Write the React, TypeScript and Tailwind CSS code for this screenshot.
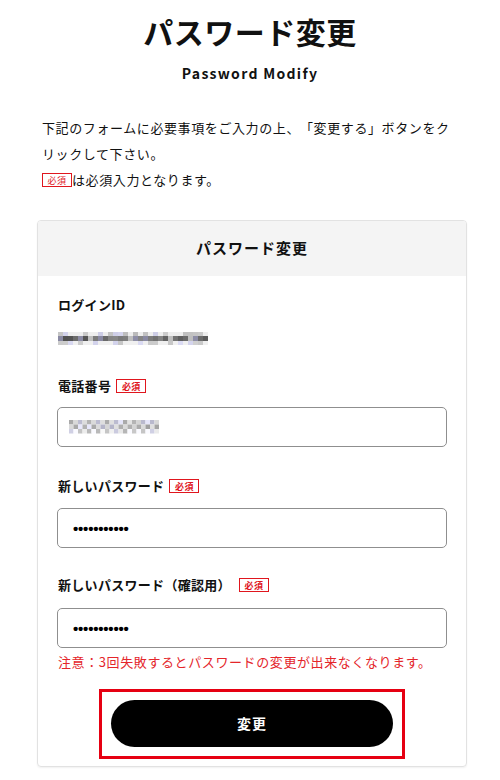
import React from "react";

const JP = '"Noto Sans CJK JP", "Noto Sans", sans-serif';

function rand(seed: number) {
  let s = seed;
  return () => {
    s = (s * 9301 + 49297) % 233280;
    return s / 233280;
  };
}

function EmailMosaic() {
  const r = rand(11);
  const cols = 30;
  const rows = 3;
  const heights = [4, 5, 4];
  const offsets = [0, 4, 9];
  const cells: React.ReactElement[] = [];
  const gaps = [6, 14, 22, 26];
  for (let y = 0; y < rows; y++) {
    for (let x = 0; x < cols; x++) {
      const v = r();
      let g: number;
      if (y === 0) g = v < 0.45 ? 238 : 165 + Math.floor(v * 50);
      else if (y === 1) g = gaps.includes(x) ? 190 : 80 + Math.floor(v * 70);
      else g = v < 0.55 ? 240 : 170 + Math.floor(v * 50);
      const b = Math.min(255, g + (v > 0.8 ? 25 : 0));
      cells.push(
        <rect key={`${x}-${y}`} x={x * 5} y={offsets[y]} width={5} height={heights[y]} fill={`rgb(${g},${g},${b})`} />
      );
    }
  }
  return (
    <svg width={150} height={13} viewBox="0 0 150 13">
      {cells}
    </svg>
  );
}

function PhoneMosaic() {
  const r = rand(3);
  const cols = 20;
  const rows = 3;
  const cells: React.ReactElement[] = [];
  for (let y = 0; y < rows; y++) {
    for (let x = 0; x < cols; x++) {
      const v = r();
      const dark = (x + y) % 2 === 0;
      let g = dark ? 160 + Math.floor(v * 30) : 212 + Math.floor(v * 25);
      if (y === 2) g = Math.min(250, g + 20);
      const b = Math.min(255, g + (v > 0.7 ? 20 : 0));
      cells.push(
        <rect key={`${x}-${y}`} x={x * 4.5} y={y * 4.5} width={4.5} height={4.5} fill={`rgb(${g},${g},${b})`} />
      );
    }
  }
  return (
    <svg width={90} height={13.5} viewBox="0 0 90 13.5">
      {cells}
    </svg>
  );
}

function Badge() {
  return (
    <span className="inline-flex h-[14px] w-[30px] items-center justify-center border border-[#e0161e] text-[9px] leading-none text-[#e0161e]">
      必須
    </span>
  );
}

function Dots() {
  return (
    <span
      className="text-[15px] font-bold leading-none tracking-[-0.2px] text-black"
      style={{ fontFamily: '"Liberation Sans", sans-serif' }}
    >
      •••••••••••
    </span>
  );
}

export default function App() {
  return (
    <div className="min-h-[780px] w-[500px] bg-white text-[#111] [text-spacing-trim:space-all]" style={{ fontFamily: JP }}>
      <div className="pt-[11px]">
        <h1 className="text-center text-[30px] font-bold leading-[40px] tracking-[0.5px]">パスワード変更</h1>
        <p className="mt-[12px] text-center text-[14px] font-bold leading-[20px] tracking-[1.3px]">Password Modify</p>

        <div className="mx-[42px] mt-[32px] text-[13px] leading-[26px] tracking-[0.6px]">
          <p>下記のフォームに必要事項をご入力の上、「変更する」ボタンをクリックして下さい。</p>
          <p className="flex items-center">
            <Badge />
            <span>は必須入力となります。</span>
          </p>
        </div>

        <div className="ml-[37px] mt-[27px] w-[430px] overflow-hidden rounded-[4px] border border-[#e2e2e2] shadow-[0_1px_2px_rgba(0,0,0,0.06)]">
          <div className="flex h-[55px] items-center justify-center bg-[#f4f4f4] text-[15px] font-bold tracking-[1px]">
            パスワード変更
          </div>
          <div className="px-[19px] pb-[7px] pt-[19px]">
            <div className="pl-[1px] text-[13px] font-bold leading-[20px] tracking-[0.3px]">ログインID</div>
            <div className="mt-[13px] flex h-[20px] items-center pl-[1px]">
              <EmailMosaic />
            </div>

            <div className="mt-[28px] flex items-center gap-[5px] pl-[1px] text-[13px] font-bold leading-[20px] tracking-[0.3px]">
              <span>電話番号</span>
              <Badge />
            </div>
            <div className="mt-[11px] flex h-[40px] items-center rounded-[5px] border-[1.5px] border-[#8f8f8f] pl-[11px]">
              <PhoneMosaic />
            </div>

            <div className="mt-[29px] flex items-center gap-[5px] pl-[1px] text-[13px] font-bold leading-[20px] tracking-[0.3px]">
              <span>新しいパスワード</span>
              <Badge />
            </div>
            <div className="mt-[12px] flex h-[40px] items-center rounded-[5px] border-[1.5px] border-[#8f8f8f] pl-[15px]">
              <Dots />
            </div>

            <div className="mt-[27px] flex items-center gap-[8px] pl-[1px] text-[13px] font-bold leading-[20px] tracking-[0.3px]">
              <span>新しいパスワード（確認用）</span>
              <Badge />
            </div>
            <div className="mt-[13px] flex h-[40px] items-center rounded-[5px] border-[1.5px] border-[#8f8f8f] pl-[15px]">
              <Dots />
            </div>

            <p className="mt-[4px] pl-[1px] text-[13px] leading-[20px] tracking-[0.6px] text-[#e4262b]">
              注意：3回失敗するとパスワードの変更が出来なくなります。
            </p>

            <div className="mt-[17px] flex justify-center">
              <div className="w-[306px] border-[3px] border-[#e60012] px-[9px] pb-[9px] pt-[8px]">
                <button className="flex h-[47px] w-full items-center justify-center rounded-full bg-black text-[14px] font-bold tracking-[1px] text-white">
                  変更
                </button>
              </div>
            </div>
          </div>
        </div>
      </div>
    </div>
  );
}
